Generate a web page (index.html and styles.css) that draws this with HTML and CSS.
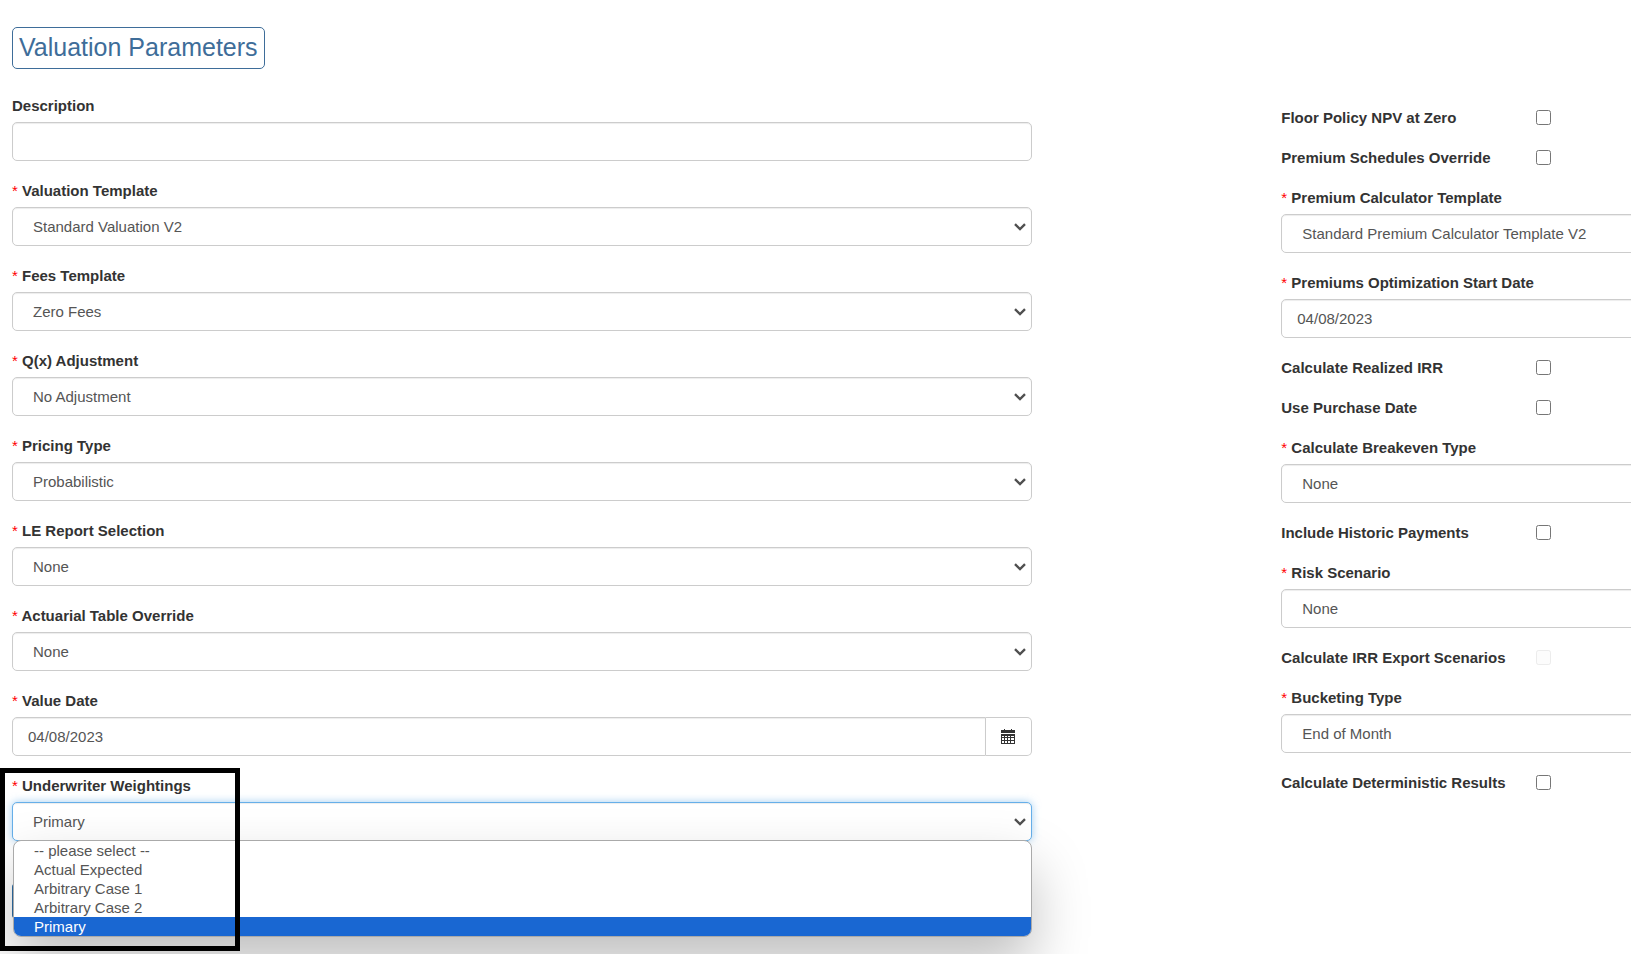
FILE: index.html
```html
<!DOCTYPE html>
<html lang="en">
<head>
  <meta charset="UTF-8" />
  <title>Valuation Parameters</title>
  <link rel="stylesheet" href="styles.css">
</head>
<body>
  <h1 class="page-title">Valuation Parameters</h1>

  <form class="params">
    <div class="col-left">
      <div class="form-group">
        <label for="description">Description</label>
        <input class="form-control" type="text" id="description" name="description" />
      </div>

      <div class="form-group">
        <label for="valuation_template"><span class="req">*</span> Valuation Template</label>
        <select class="form-control" id="valuation_template" name="valuation_template">
          <option>Standard Valuation V2</option>
        </select>
      </div>

      <div class="form-group">
        <label for="fees_template"><span class="req">*</span> Fees Template</label>
        <select class="form-control" id="fees_template" name="fees_template">
          <option>Zero Fees</option>
        </select>
      </div>

      <div class="form-group">
        <label for="qx_adjustment"><span class="req">*</span> Q(x) Adjustment</label>
        <select class="form-control" id="qx_adjustment" name="qx_adjustment">
          <option>No Adjustment</option>
        </select>
      </div>

      <div class="form-group">
        <label for="pricing_type"><span class="req">*</span> Pricing Type</label>
        <select class="form-control" id="pricing_type" name="pricing_type">
          <option>Probabilistic</option>
        </select>
      </div>

      <div class="form-group">
        <label for="le_report"><span class="req">*</span> LE Report Selection</label>
        <select class="form-control" id="le_report" name="le_report">
          <option>None</option>
        </select>
      </div>

      <div class="form-group">
        <label for="actuarial_table"><span class="req">*</span> Actuarial Table Override</label>
        <select class="form-control" id="actuarial_table" name="actuarial_table">
          <option>None</option>
        </select>
      </div>

      <div class="form-group">
        <label for="value_date"><span class="req">*</span> Value Date</label>
        <div class="input-group">
          <input class="form-control" type="text" id="value_date" name="value_date" value="04/08/2023" />
          <button class="input-addon" type="button" aria-label="Choose date">
            <svg width="14" height="15" viewBox="0 0 14 15" fill="#333">
              <path d="M0 1h3V0h1v1h6V0h1v1h3v3H0z" />
              <path fill-rule="evenodd" d="M0 5h14v10H0zM1 7v1h2V7zM4 7v1h2V7zM7 7v1h2V7zM10 7v1h3V7zM1 9v2h2V9zM4 9v2h2V9zM7 9v2h2V9zM10 9v2h3V9zM1 12v2h2v-2zM4 12v2h2v-2zM7 12v2h2v-2zM10 12v2h3v-2z" />
            </svg>
          </button>
        </div>
      </div>

      <div class="form-group">
        <label for="underwriter"><span class="req">*</span> Underwriter Weightings</label>
        <div class="dropdown">
          <select class="form-control is-open" id="underwriter" name="underwriter">
            <option>Primary</option>
          </select>
          <ul class="dropdown-list" role="listbox" aria-label="Underwriter Weightings">
            <li role="option">-- please select --</li>
            <li role="option">Actual Expected</li>
            <li role="option">Arbitrary Case 1</li>
            <li role="option">Arbitrary Case 2</li>
            <li role="option" class="selected" aria-selected="true">Primary</li>
          </ul>
        </div>
        <div class="highlight-box"></div>
      </div>

      <button class="btn-primary" type="submit" aria-label="Save"></button>
    </div>

    <div class="col-right">
      <div class="check-row">
        <label for="floor_npv">Floor Policy NPV at Zero</label>
        <input type="checkbox" id="floor_npv" name="floor_npv" />
      </div>

      <div class="check-row">
        <label for="premium_override">Premium Schedules Override</label>
        <input type="checkbox" id="premium_override" name="premium_override" />
      </div>

      <div class="form-group">
        <label for="premium_template"><span class="req">*</span> Premium Calculator Template</label>
        <select class="form-control" id="premium_template" name="premium_template">
          <option>Standard Premium Calculator Template V2</option>
        </select>
      </div>

      <div class="form-group">
        <label for="optimization_date"><span class="req">*</span> Premiums Optimization Start Date</label>
        <input class="form-control" type="text" id="optimization_date" name="optimization_date" value="04/08/2023" />
      </div>

      <div class="check-row">
        <label for="realized_irr">Calculate Realized IRR</label>
        <input type="checkbox" id="realized_irr" name="realized_irr" />
      </div>

      <div class="check-row">
        <label for="purchase_date">Use Purchase Date</label>
        <input type="checkbox" id="purchase_date" name="purchase_date" />
      </div>

      <div class="form-group">
        <label for="breakeven_type"><span class="req">*</span> Calculate Breakeven Type</label>
        <select class="form-control" id="breakeven_type" name="breakeven_type">
          <option>None</option>
        </select>
      </div>

      <div class="check-row">
        <label for="historic_payments">Include Historic Payments</label>
        <input type="checkbox" id="historic_payments" name="historic_payments" />
      </div>

      <div class="form-group">
        <label for="risk_scenario"><span class="req">*</span> Risk Scenario</label>
        <select class="form-control" id="risk_scenario" name="risk_scenario">
          <option>None</option>
        </select>
      </div>

      <div class="check-row">
        <label for="irr_export">Calculate IRR Export Scenarios</label>
        <input type="checkbox" id="irr_export" name="irr_export" disabled />
      </div>

      <div class="form-group">
        <label for="bucketing_type"><span class="req">*</span> Bucketing Type</label>
        <select class="form-control" id="bucketing_type" name="bucketing_type">
          <option>End of Month</option>
        </select>
      </div>

      <div class="check-row">
        <label for="deterministic">Calculate Deterministic Results</label>
        <input type="checkbox" id="deterministic" name="deterministic" />
      </div>
    </div>
  </form>
</body>
</html>
```

FILE: styles.css
```css
* {
  box-sizing: border-box;
}
body {
  min-height: 100vh;
  margin: 0;
  padding: 27px 0 30px 12px;
  background-color: #fff;
  color: #333;
  font-family: Arial, "Liberation Sans", sans-serif;
  font-size: 15px;
  line-height: 21px;
  overflow-x: hidden;
}
.page-title {
  width: fit-content;
  margin: 0 0 26px;
  padding: 5px 6px 7px;
  border: 1px solid #3e6d99;
  border-radius: 5px;
  color: #3e6d99;
  font-size: 25px;
  font-weight: normal;
  line-height: 28px;
}
.params {
  display: grid;
  grid-template-columns: 63% 63%;
  column-gap: 15.4%;
}
.col-left,
.col-right {
  display: flex;
  flex-direction: column;
  gap: 19px;
}
.col-right {
  padding-top: 12px;
}
.form-group {
  position: relative;
}
label {
  display: block;
  font-weight: bold;
}
.form-group > label {
  margin-bottom: 6px;
}
.req {
  color: #f00;
  font-weight: normal;
}
.form-control {
  display: block;
  width: 100%;
  height: 39px;
  padding: 0 15px;
  border: 1px solid #ccc;
  border-radius: 5px;
  background-color: #fff;
  box-shadow: inset 0 1px 1px rgba(0, 0, 0, 0.075);
  color: #555;
  font-family: inherit;
  font-size: 15px;
}
select.form-control {
  padding: 0 20px;
  appearance: none;
  background-image: url("data:image/svg+xml,%3Csvg xmlns='http://www.w3.org/2000/svg' width='12' height='8' viewBox='0 0 12 8'%3E%3Cpath d='M1 1.2l5 4.8 5-4.8' fill='none' stroke='%23505050' stroke-width='2.4'/%3E%3C/svg%3E");
  background-repeat: no-repeat;
  background-position: right 5px center;
}
.input-group {
  display: flex;
}
.input-group .form-control {
  flex: 1;
  border-radius: 5px 0 0 5px;
}
.input-addon {
  display: flex;
  align-items: center;
  justify-content: center;
  width: 46px;
  padding: 0;
  border: 1px solid #ccc;
  border-left: 0;
  border-radius: 0 5px 5px 0;
  background-color: #fff;
}

/* open select with its list */
.dropdown {
  position: relative;
}
.form-control.is-open {
  border-color: #66afe9;
  box-shadow: inset 0 1px 1px rgba(0, 0, 0, 0.075), 0 0 9px rgba(102, 175, 233, 0.6);
}
.dropdown-list {
  position: absolute;
  z-index: 2;
  top: calc(100% - 1px);
  left: 1px;
  right: 0;
  margin: 0;
  padding: 0;
  overflow: hidden;
  border: 1px solid #aaa;
  border-radius: 8px;
  background-color: #fff;
  box-shadow: 0 28px 56px rgba(0, 0, 0, 0.25);
  color: #555;
  line-height: 19px;
  list-style: none;
}
.dropdown-list li {
  padding-left: 20px;
}
.dropdown-list .selected {
  background-color: #1967d2;
  color: #fff;
}
.highlight-box {
  position: absolute;
  z-index: 3;
  top: -7px;
  left: -12px;
  width: 240px;
  height: 183px;
  border: 5px solid #000;
  pointer-events: none;
}
.btn-primary {
  width: 90px;
  height: 38px;
  margin-top: 22px;
  border: 1px solid #2e6da4;
  border-radius: 5px;
  background-color: #337ab7;
}

.check-row {
  display: flex;
  align-items: center;
}
.check-row label {
  width: 255px;
}
.check-row input {
  width: 15px;
  height: 15px;
  margin: 0;
}
.check-row input:disabled {
  opacity: 0.4;
}
```
